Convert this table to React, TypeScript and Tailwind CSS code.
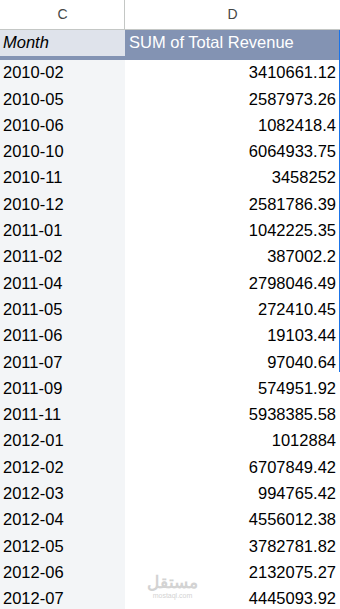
const rows: [string, string][] = [
  ["2010-02", "3410661.12"],
  ["2010-05", "2587973.26"],
  ["2010-06", "1082418.4"],
  ["2010-10", "6064933.75"],
  ["2010-11", "3458252"],
  ["2010-12", "2581786.39"],
  ["2011-01", "1042225.35"],
  ["2011-02", "387002.2"],
  ["2011-04", "2798046.49"],
  ["2011-05", "272410.45"],
  ["2011-06", "19103.44"],
  ["2011-07", "97040.64"],
  ["2011-09", "574951.92"],
  ["2011-11", "5938385.58"],
  ["2012-01", "1012884"],
  ["2012-02", "6707849.42"],
  ["2012-03", "994765.42"],
  ["2012-04", "4556012.38"],
  ["2012-05", "3782781.82"],
  ["2012-06", "2132075.27"],
  ["2012-07", "4445093.92"],
];

export default function App() {
  return (
    <div className="relative h-[609px] w-[340px] overflow-hidden bg-white font-['Liberation_Sans',Arial,sans-serif] text-black">
      {/* column letters */}
      <div className="flex h-[30px] border-b border-[#c4c7c5] text-[14px] text-[#444746]">
        <div className="flex w-[125px] items-center justify-center border-r border-[#c4c7c5] pl-[1px]">C</div>
        <div className="flex flex-1 items-center justify-center">D</div>
      </div>

      {/* pivot header */}
      <div className="flex h-[29.5px] border-b-[4.5px] border-[#8393b3] text-[16.5px]">
        <div className="flex w-[125px] items-center bg-[#dfe3eb] pl-[3px] italic">Month</div>
        <div className="flex flex-1 items-center bg-[#8393b3] pl-[4px] text-white">SUM of Total Revenue</div>
      </div>

      {/* data rows */}
      <div className="flex flex-col text-[16.5px]">
        {rows.map(([month, total]) => (
          <div key={month} className="flex h-[26.3px] shrink-0">
            <div className="flex w-[125px] items-center bg-[#f3f5f7] pl-[3px]">{month}</div>
            <div className="flex flex-1 items-center justify-end pr-[4px]">{total}</div>
          </div>
        ))}
      </div>

      {/* selection edge */}
      <div className="absolute right-0 top-[30px] h-[342px] w-[1px] bg-[#1a73e8]" />

      {/* watermark */}
      <div className="absolute left-[147px] top-[574px] flex flex-col items-center text-[#d3d3d3]">
        <span className="font-['Noto_Sans',sans-serif] text-[17px] font-bold leading-[16px]">مستقل</span>
        <span className="mt-[2px] text-[7px] leading-[7px]">mostaql.com</span>
      </div>
    </div>
  );
}
